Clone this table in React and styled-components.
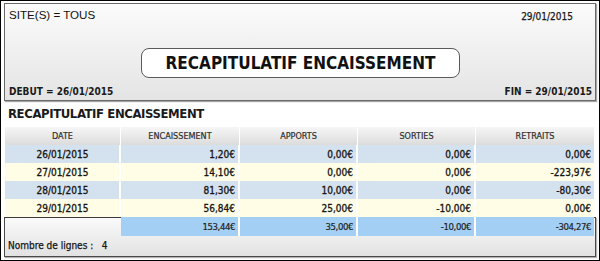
import styled, { createGlobalStyle } from 'styled-components'

const GlobalStyle = createGlobalStyle`
  html, body {
    margin: 0;
    padding: 0;
    background: #ffffff;
  }
  * {
    box-sizing: border-box;
  }
`;

const Frame = styled.div`
  width: 600px;
  height: 261px;
  border: 1px solid #000;
  padding: 2px 3px 2px 3px;
  display: flex;
  flex-direction: column;
  font-family: "DejaVu Sans Condensed", "DejaVu Sans", sans-serif;
  color: #1e1e1e;
  overflow: hidden;
`;

const HeaderPanel = styled.div`
  height: 98px;
  border: 1px solid #6a6a6a;
  background: linear-gradient(#fbfbfb, #e4e4e4);
  box-shadow: 1px 1px 1px rgba(0, 0, 0, 0.35);
  display: flex;
  flex-direction: column;
  padding: 4px 3px 2px 4px;
`;

const TopRow = styled.div`
  display: flex;
  justify-content: space-between;
  align-items: flex-start;
  height: 40px;
`;

const SiteLabel = styled.span`
  font-family: "Liberation Sans", Arial, sans-serif;
  font-size: 11.6px;
  color: #111;
  line-height: 14px;
`;

const SmallText = styled.span`
  font-size: 10px;
  font-weight: ${p => (p.$bold ? 700 : 400)};
  color: #1a1a1a;
  line-height: 12px;
  margin-top: ${p => p.$top || 0}px;
  margin-right: ${p => p.$right || 0}px;
  -webkit-text-stroke: ${p => (p.$bold ? '0' : '0.25px')};
`;

const TitleRow = styled.div`
  display: flex;
  justify-content: center;
`;

const TitleBox = styled.div`
  width: 319px;
  height: 30px;
  border: 1px solid #5a5a5a;
  border-radius: 8px;
  background: #ffffff;
  display: flex;
  align-items: center;
  justify-content: center;
  font-size: 17px;
  font-weight: 700;
  color: #111;
`;

const BottomRow = styled.div`
  margin-top: auto;
  display: flex;
  justify-content: space-between;
  align-items: flex-end;
`;

const SectionTitle = styled.div`
  font-size: 13px;
  font-weight: 700;
  letter-spacing: -0.4px;
  color: #1a1a1a;
  padding: 5px 0 0 4px;
  height: 26px;
`;

const Table = styled.div`
  margin-left: 1px;
  width: 589px;
  display: flex;
  flex-direction: column;
`;

const Row = styled.div`
  display: grid;
  grid-template-columns: 116px 119px 118px 118px 118px;
  height: 18px;
  background: ${p => p.$bg || 'transparent'};
`;

const HeadCell = styled.div`
  background: linear-gradient(#f6f6f6, #dcdcdc);
  border-right: 1px solid #ffffff;
  display: flex;
  align-items: center;
  justify-content: center;
  font-size: 9px;
  color: #2e2e2e;
  -webkit-text-stroke: 0.2px;
  &:last-child {
    border-right: none;
  }
`;

const Cell = styled.div`
  border-right: 2px solid #ffffff;
  display: flex;
  align-items: center;
  justify-content: ${p => (p.$center ? 'center' : 'flex-end')};
  padding: 0 3px 0 4px;
  font-size: 10px;
  color: #151515;
  -webkit-text-stroke: 0.3px;
  &:last-child {
    border-right: none;
  }
`;

const FooterPanel = styled.div`
  width: 592px;
  height: 40px;
  border: 1px solid #4a4a4a;
  border-top-color: #3a3a3a;
  background: linear-gradient(#fafafa, #e2e2e2);
  box-shadow: 1px 1px 1px rgba(0, 0, 0, 0.3);
  display: flex;
  flex-direction: column;
  padding-right: 1px;
`;

const TotalRow = styled.div`
  display: grid;
  grid-template-columns: 116px 119px 118px 118px 118px;
  height: 19px;
  margin-top: -1px;
`;

const TotalCell = styled.div`
  background: ${p => (p.$empty ? 'transparent' : '#a3cff5')};
  border-right: ${p => (p.$empty ? 'none' : '2px solid #ffffff')};
  display: flex;
  align-items: center;
  justify-content: flex-end;
  padding: 0 3px 0 4px;
  font-size: 9.5px;
  letter-spacing: -0.4px;
  color: #1e1e1e;
  -webkit-text-stroke: 0.2px;
  &:last-child {
    border-right: none;
  }
`;

const CountLine = styled.div`
  padding: 4px 0 0 3px;
  font-size: 10px;
  color: #151515;
  -webkit-text-stroke: 0.25px;
`;

const columns = ['DATE', 'ENCAISSEMENT', 'APPORTS', 'SORTIES', 'RETRAITS']

const rows = [
  ['26/01/2015', '1,20€', '0,00€', '0,00€', '0,00€'],
  ['27/01/2015', '14,10€', '0,00€', '0,00€', '-223,97€'],
  ['28/01/2015', '81,30€', '10,00€', '0,00€', '-80,30€'],
  ['29/01/2015', '56,84€', '25,00€', '-10,00€', '0,00€'],
]

const totals = ['153,44€', '35,00€', '-10,00€', '-304,27€']

const App = () => {
  return (
    <>
      <GlobalStyle />
      <Frame>
        <HeaderPanel>
          <TopRow>
            <SiteLabel>SITE(S) = TOUS</SiteLabel>
            <SmallText $top={3} $right={19}>29/01/2015</SmallText>
          </TopRow>
          <TitleRow>
            <TitleBox>RECAPITULATIF ENCAISSEMENT</TitleBox>
          </TitleRow>
          <BottomRow>
            <SmallText $bold>DEBUT = 26/01/2015</SmallText>
            <SmallText $bold>FIN = 29/01/2015</SmallText>
          </BottomRow>
        </HeaderPanel>

        <SectionTitle>RECAPITULATIF ENCAISSEMENT</SectionTitle>

        <Table>
          <Row>
            {columns.map(col => (
              <HeadCell key={col}>{col}</HeadCell>
            ))}
          </Row>
          {rows.map((row, i) => (
            <Row key={row[0]} $bg={i % 2 === 0 ? '#d4e1ee' : '#fffde6'}>
              {row.map((value, j) => (
                <Cell key={j} $center={j === 0}>{value}</Cell>
              ))}
            </Row>
          ))}
        </Table>

        <FooterPanel>
          <TotalRow>
            <TotalCell $empty />
            {totals.map((value, j) => (
              <TotalCell key={j}>{value}</TotalCell>
            ))}
          </TotalRow>
          <CountLine>Nombre de lignes :&nbsp;&nbsp;&nbsp;4</CountLine>
        </FooterPanel>
      </Frame>
    </>
  )
}

export default App
